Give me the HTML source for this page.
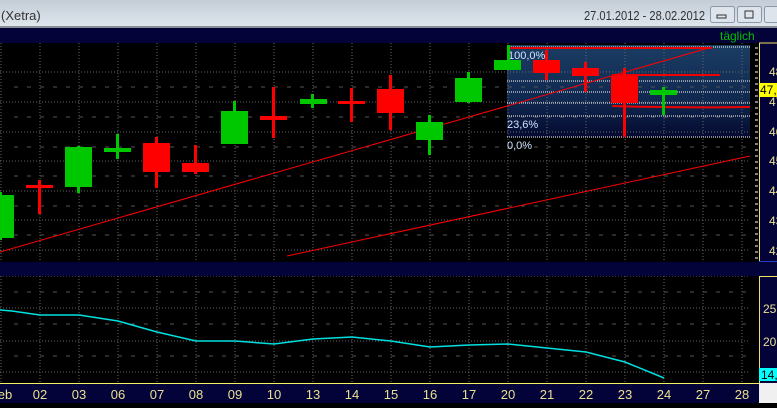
<!DOCTYPE html>
<html><head><meta charset="utf-8"><style>
body{margin:0;width:777px;height:403px;overflow:hidden;background:#000;font-family:"Liberation Sans",sans-serif}
</style></head><body>
<svg width="777" height="403" xmlns="http://www.w3.org/2000/svg" font-family="Liberation Sans, sans-serif">
<defs>
<linearGradient id="tb" x1="0" y1="0" x2="0" y2="1"><stop offset="0" stop-color="#c3ccd6"/><stop offset="1" stop-color="#dfe6ee"/></linearGradient>
<linearGradient id="fb" x1="0" y1="0" x2="0" y2="1"><stop offset="0" stop-color="#1b3d63"/><stop offset="0.6" stop-color="#102850"/><stop offset="1" stop-color="#050a30"/></linearGradient>
</defs>
<rect width="777" height="27" fill="url(#tb)"/>
<rect y="26" width="777" height="2" fill="#8a8f96"/>
<text x="1" y="20" font-size="13" fill="#333">(Xetra)</text>
<text x="584" y="20" font-size="13" fill="#333" textLength="121" lengthAdjust="spacingAndGlyphs">27.01.2012 - 28.02.2012</text>
<g fill="#dde4ec" stroke="#8b98aa"><rect x="710.5" y="6.5" width="24" height="16" rx="2"/><rect x="737.5" y="6.5" width="24" height="16" rx="2"/><rect x="764.5" y="6.5" width="24" height="16" rx="2"/></g>
<rect x="717" y="15" width="9" height="3" fill="none" stroke="#333"/>
<rect x="745" y="11" width="8" height="7" fill="none" stroke="#333"/>
<rect y="28" width="777" height="15" fill="#03033a"/>
<text x="720" y="40" font-size="12" fill="#00c000">täglich</text>
<rect y="43" width="759" height="219" fill="#000"/>
<rect x="507" y="45" width="243" height="92" fill="url(#fb)"/>
<g stroke="#666" stroke-dasharray="1,2">
<path d="M1 43V262M40 43V262M79 43V262M118 43V262M157 43V262M196 43V262M235 43V262M274 43V262M313 43V262M352 43V262M391 43V262M430 43V262M469 43V262M508 43V262M547 43V262M586 43V262M625 43V262M664 43V262M703 43V262M742 43V262"/>
<path d="M0 72H750M0 102H750M0 132H750M0 161H750M0 191H750M0 220H750M0 250H750"/>
<path d="M1 276V383M40 276V383M79 276V383M118 276V383M157 276V383M196 276V383M235 276V383M274 276V383M313 276V383M352 276V383M391 276V383M430 276V383M469 276V383M508 276V383M547 276V383M586 276V383M625 276V383M664 276V383M703 276V383M742 276V383"/>
<path d="M0 276H750M0 308H750M0 341H750M0 372H750"/>
</g>
<g stroke="#555" stroke-dasharray="4,9"><path d="M14 87H750M14 117H750M14 147H750M14 176H750M14 206H750M14 235H750M14 292H750M14 324H750M14 356H750"/></g>
<g stroke="#fff" stroke-dasharray="1,1"><path d="M507 47H750M507 81H750M507 92H750M507 103H750M507 116H750M507 137H750"/></g>
<g font-size="11" fill="#cfe3ff"><text x="508" y="59">100,0%</text><text x="507" y="128">23,6%</text><text x="507" y="149">0,0%</text></g>
<g stroke="#f00" stroke-width="1" fill="none">
<path d="M0 252L712 47"/><path d="M287 256L750 156"/>
</g>
<g stroke="#e00" stroke-width="2" fill="none"><path d="M508 48H712"/><path d="M612 75H720"/><path d="M612 106Q680 108 750 107"/></g>
<g fill="#00c800">
<rect x="0" y="195" width="14" height="43"/><rect x="0" y="192" width="2" height="48"/>
<rect x="65" y="147" width="27" height="40"/><rect x="77" y="146" width="3" height="47"/>
<rect x="104" y="148" width="27" height="4"/><rect x="116" y="134" width="3" height="25"/>
<rect x="221" y="111" width="27" height="33"/><rect x="233" y="101" width="3" height="32"/>
<rect x="300" y="99" width="27" height="5"/><rect x="311" y="94" width="3" height="14"/>
<rect x="416" y="122" width="27" height="18"/><rect x="428" y="115" width="3" height="40"/>
<rect x="455" y="78" width="27" height="24"/><rect x="467" y="72" width="3" height="31"/>
<rect x="494" y="60" width="27" height="10"/><rect x="507" y="45" width="3" height="25"/>
<rect x="650" y="90" width="27" height="5"/><rect x="662" y="87" width="3" height="28"/>
</g>
<g fill="#f00">
<rect x="26" y="185" width="27" height="3"/><rect x="38" y="180" width="3" height="34"/>
<rect x="143" y="143" width="27" height="29"/><rect x="155" y="137" width="3" height="51"/>
<rect x="182" y="163" width="27" height="9"/><rect x="194" y="145" width="3" height="29"/>
<rect x="260" y="116" width="27" height="4"/><rect x="272" y="87" width="3" height="51"/>
<rect x="338" y="101" width="27" height="3"/><rect x="350" y="88" width="3" height="34"/>
<rect x="377" y="89" width="27" height="24"/><rect x="389" y="75" width="3" height="55"/>
<rect x="533" y="60" width="27" height="13"/><rect x="545" y="50" width="3" height="30"/>
<rect x="572" y="68" width="27" height="8"/><rect x="584" y="62" width="3" height="30"/>
<rect x="611" y="76" width="27" height="27"/><rect x="623" y="68" width="3" height="69"/>
</g>
<rect x="759" y="43" width="18" height="219" fill="#03033a"/>
<path d="M759.5 43V262" stroke="#f0e060"/>
<path d="M759 43H777" stroke="#f0e060"/>
<g stroke="#fff" stroke-width="1"><path d="M755 48h3M755 54h3M755 60h3M755 66h3M755 72h3M755 78h3M755 84h3M755 90h3M755 96h3M755 102h3M755 108h3M755 114h3M755 120h3M755 126h3M755 132h3M755 138h3M755 144h3M755 150h3M755 156h3M755 162h3M755 168h3M755 174h3M755 180h3M755 186h3M755 192h3M755 198h3M755 204h3M755 210h3M755 216h3M755 222h3M755 228h3M755 234h3M755 240h3M755 246h3M755 252h3M755 258h3"/></g>
<g font-size="12" fill="#e8e090"><text x="769" y="76">48</text><text x="769" y="106">47</text><text x="769" y="136">46</text><text x="769" y="165">45</text><text x="769" y="195">44</text><text x="769" y="225">43</text><text x="769" y="255">42</text></g>
<rect x="759" y="83" width="18" height="14" fill="#ffff00"/><text x="760" y="94" font-size="12" fill="#000">47,</text>
<rect y="262" width="777" height="14" fill="#03033a"/>
<path d="M759 261.5H777" stroke="#2040c0"/>
<polyline fill="none" stroke="#00e0e0" stroke-width="1.5" points="0,310 12,311 40,315 79,315 118,321 157,332 196,341 235,341 274,344 313,339 352,337 391,341 430,347 469,345 508,344 547,348 586,352 625,362 664,378"/>
<rect x="759" y="276" width="18" height="107" fill="#03033a"/>
<path d="M759.5 276V383M759 276.5H777" stroke="#f0e060"/>
<g font-size="12" fill="#e8e090"><text x="763" y="313">25,</text><text x="763" y="346">20,</text></g>
<rect x="759" y="368" width="18" height="13" fill="#00ffff"/><text x="761" y="379" font-size="12" fill="#000">14,</text>
<rect y="383" width="759" height="20" fill="#03033a"/>
<path d="M0 383.5H759" stroke="#f0f060"/>
<rect x="759" y="383" width="18" height="20" fill="#f0f0f0"/>
<g font-size="13" fill="#e8e090" text-anchor="middle"><text x="5" y="399">eb</text><text x="40" y="399">02</text><text x="79" y="399">03</text><text x="118" y="399">06</text><text x="157" y="399">07</text><text x="196" y="399">08</text><text x="235" y="399">09</text><text x="274" y="399">10</text><text x="313" y="399">13</text><text x="352" y="399">14</text><text x="391" y="399">15</text><text x="430" y="399">16</text><text x="469" y="399">17</text><text x="508" y="399">20</text><text x="547" y="399">21</text><text x="586" y="399">22</text><text x="625" y="399">23</text><text x="664" y="399">24</text><text x="703" y="399">27</text><text x="742" y="399">28</text></g>
</svg>
</body></html>
